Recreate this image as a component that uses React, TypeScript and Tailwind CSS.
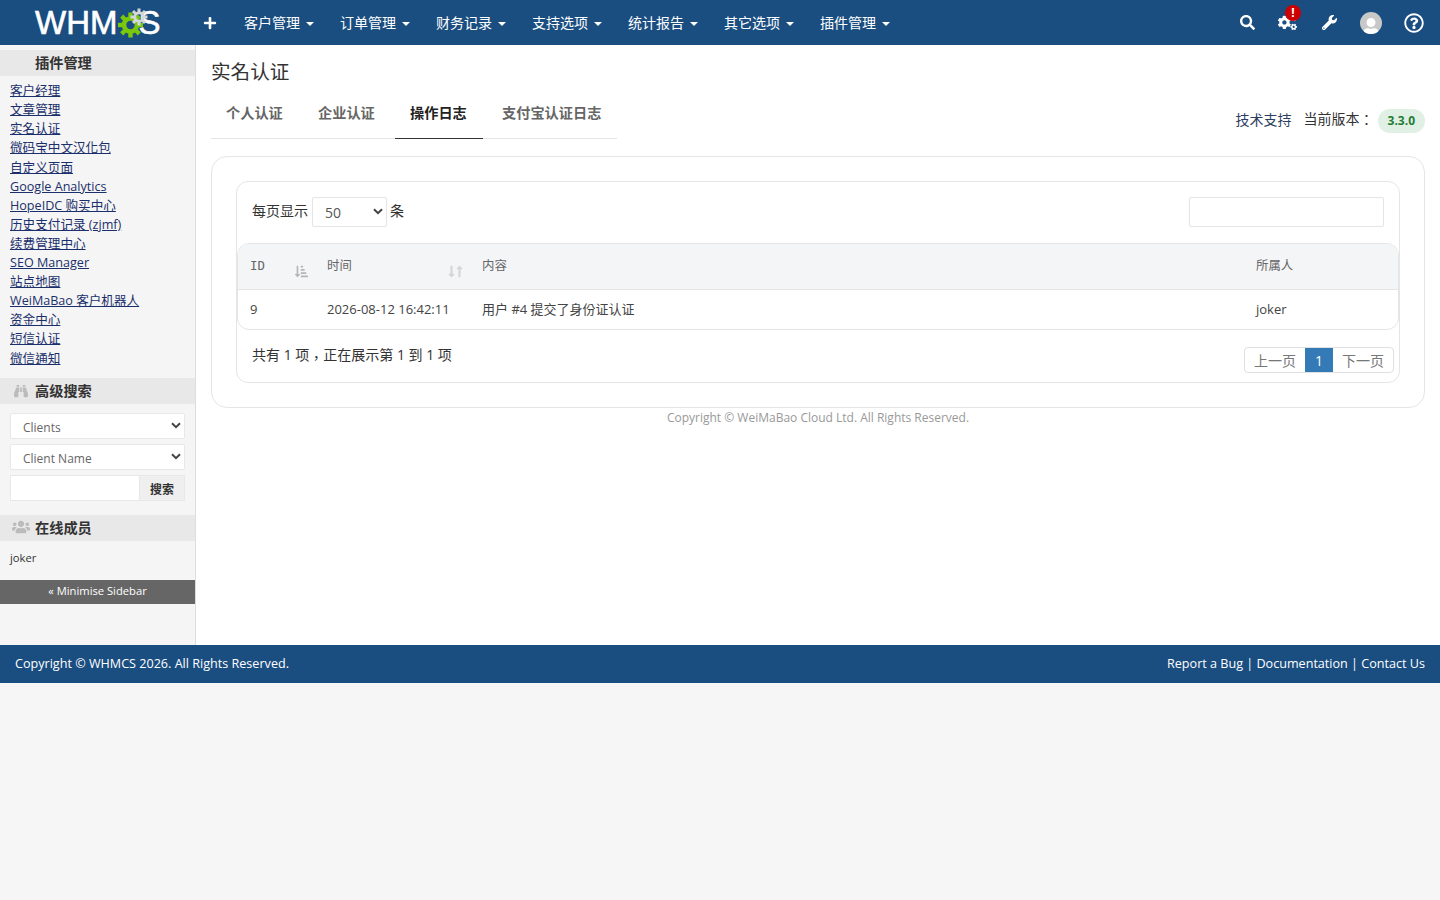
import { FaBinoculars, FaCogs, FaPlus, FaRegQuestionCircle, FaSearch, FaSortAmountDownAlt, FaUsers, FaWrench, FaUser, FaLongArrowAltDown, FaLongArrowAltUp } from "react-icons/fa";

const font = "font-['Open_Sans','Noto_Sans_CJK_TC',sans-serif]";

const navItems = ["客户管理", "订单管理", "财务记录", "支持选项", "统计报告", "其它选项", "插件管理"];
const addons = [
  "客户经理",
  "文章管理",
  "实名认证",
  "微码宝中文汉化包",
  "自定义页面",
  "Google Analytics",
  "HopeIDC 购买中心",
  "历史支付记录 (zjmf)",
  "续费管理中心",
  "SEO Manager",
  "站点地图",
  "WeiMaBao 客户机器人",
  "资金中心",
  "短信认证",
  "微信通知",
];

function Gear() {
  const teeth = [0, 45, 90, 135, 180, 225, 270, 315];
  return (
    <svg width="30" height="30" viewBox="0 0 30 30" className="shrink-0">
      <g transform="translate(12.5 17)">
        {teeth.map((a) => (
          <rect key={a} x="-2.2" y="-12.5" width="4.4" height="5" fill="#7ac70c" transform={`rotate(${a})`} />
        ))}
        <circle r="6.5" fill="none" stroke="#7ac70c" strokeWidth="4.6" />
      </g>
      <g transform="translate(21 9)">
        {teeth.map((a) => (
          <rect key={a} x="-1.5" y="-8.5" width="3" height="3.5" fill="#d5d8da" transform={`rotate(${a})`} />
        ))}
        <circle r="4.2" fill="none" stroke="#d5d8da" strokeWidth="3" />
      </g>
    </svg>
  );
}

function SideHeading({ icon, children }: { icon?: React.ReactNode; children: React.ReactNode }) {
  return (
    <div className="h-[26px] bg-[#e8e8e8] flex items-center relative pl-[35px] text-[14.2px] font-bold text-[#333]">
      {icon}
      {children}
    </div>
  );
}

function FakeSelect({ label, className, textClass = "mt-[4px]" }: { label: string; className: string; textClass?: string }) {
  return (
    <div className={`bg-white border border-[#e8e8e8] rounded-[2px] flex items-center justify-between ${className}`}>
      <span className={textClass}>{label}</span>
      <svg width="10" height="7" viewBox="0 0 10 7" className="mt-[-1px]">
        <path d="M1 1.2 5 5.2 9 1.2" fill="none" stroke="#444" strokeWidth="2" />
      </svg>
    </div>
  );
}

export default function App() {
  return (
    <div className={`${font} min-h-[900px] bg-[#f6f6f6] text-[13px] text-[#333]`}>
      <header className="h-[45px] bg-[#1a4d80] flex items-center text-white">
        <div className="w-[196px] pl-[35px] flex items-center shrink-0">
          <span className="font-['Liberation_Sans',sans-serif] text-[33px] leading-none [-webkit-text-stroke:0.6px_white]">WHM</span>
          <span className="font-['Liberation_Sans',sans-serif] text-[33px] leading-none ml-[21px] [-webkit-text-stroke:0.6px_white]">S</span>
          <span className="relative left-[-42px] w-0"><Gear /></span>
        </div>
        <FaPlus className="text-[14px] ml-[7px]" />
        <nav className="flex items-center ml-[27px] gap-[26px] text-[14px]">
          {navItems.map((item) => (
            <span key={item} className="flex items-center gap-[6px]">
              {item}
              <span className="w-0 h-0 border-x-[4px] border-x-transparent border-t-[4px] border-t-white mt-[2px]" />
            </span>
          ))}
        </nav>
        <div className="ml-auto flex items-center pr-[16px]">
          <FaSearch className="text-[15px] mr-[23px]" />
          <span className="relative mr-[25px]">
            <FaCogs className="text-[19px]" />
            <span className="absolute top-[-8px] right-[-4px] w-4 h-4 rounded-full bg-[#cc0000] text-[12px] leading-4 font-bold text-center">!</span>
          </span>
          <FaWrench className="text-[15px] mr-[23px]" />
          <span className="w-[22px] h-[22px] rounded-full bg-[#c8c8c8] overflow-hidden flex items-end justify-center mr-[22px]">
            <FaUser className="text-white text-[18px] mb-[-2px]" />
          </span>
          <FaRegQuestionCircle className="text-[20px]" />
        </div>
      </header>

      <div className="flex h-[600px] bg-white">
        <aside className="w-[196px] shrink-0 bg-[#f5f5f5] border-r border-[#ddd] pt-[5px]">
          <SideHeading>插件管理</SideHeading>
          <ul className="pl-[10px] pt-[5.2px] pb-[10.3px] text-[12.6px] leading-[19.1px] text-[#1a2f6b]">
            {addons.map((a) => (
              <li key={a}><a className="underline" href="#">{a}</a></li>
            ))}
          </ul>
          <SideHeading icon={<FaBinoculars className="absolute left-[14px] top-[6px] text-[#bbb] text-[14px]" />}>高级搜索</SideHeading>
          <div className="px-[10px] pt-[9px] pb-[14px] flex flex-col gap-[5px] text-[12px] text-[#666]">
            <FakeSelect label="Clients" className="h-[26px] pl-[12px] pr-[3px]" />
            <FakeSelect label="Client Name" className="h-[26px] pl-[12px] pr-[3px]" />
            <div className="flex h-[26px]">
              <div className="w-[130px] bg-white border border-[#e8e8e8]" />
              <div className="flex-1 bg-[#efefef] border border-[#e8e8e8] border-l-0 flex items-center justify-center font-bold text-[#333] pt-[4px]">搜索</div>
            </div>
          </div>
          <SideHeading icon={<FaUsers className="absolute left-[12px] top-[3.5px] text-[#bbb] text-[18px]" />}>在线成员</SideHeading>
          <div className="pl-[10px] pt-[8px] text-[11.2px] leading-[17px] h-[39px]">joker</div>
          <div className="h-[24px] bg-[#666] text-white text-[11.2px] flex items-center justify-center">« Minimise Sidebar</div>
        </aside>

        <main className="flex-1 px-[15px] pt-[12px]">
          <h1 className="text-[19.6px] leading-[30px] text-[#333]">实名认证</h1>
          <div className="flex items-end justify-between mt-[8px]">
            <div className="flex w-[406px] h-[44px] border-b border-[#e5e5e5] text-[14.2px] font-bold text-[#666]">
              <span className="w-[87px] pl-[15px] pt-[7px] mr-[5px]">个人认证</span>
              <span className="w-[87px] pl-[15px] pt-[7px] mr-[5px]">企业认证</span>
              <span className="w-[88px] pl-[15px] pt-[7px] mr-[4px] h-[44px] border-b border-[#333] text-[#222]">操作日志</span>
              <span className="pl-[15px] pt-[7px]">支付宝认证日志</span>
            </div>
            <div className="flex items-center mb-[6px] text-[14px]">
              <a className="mr-[12px] text-[#2c3e60] mb-[2px]" href="#">技术支持</a>
              <span className="mr-[4px] mb-[4px]">当前版本<span className="relative top-[1px]">：</span></span>
              <span className="h-[24px] px-[10px] rounded-full bg-[#e1f0e4] text-[#1e7e34] text-[12px] font-bold leading-[24px]">3.3.0</span>
            </div>
          </div>

          <div className="mt-[17px] h-[252px] border border-[#e5e5e5] rounded-[16px] p-[24px]">
            <div className="h-[202px] border border-[#e5e5e5] rounded-[12px] flex flex-col">
              <div className="h-[60px] mb-[1px] flex items-center justify-between pl-[15px] pr-[15px] text-[14px] shrink-0">
                <div className="flex items-center">
                  <span className="mb-[3px] mr-[4px]">每页显示</span>
                  <FakeSelect label="50" textClass="mt-[1px]" className="w-[75px] h-[30px] pl-[12px] pr-[3px] !border-[#e5e5e5] text-[#555]" />
                  <span className="mb-[3px] ml-[3px]">条</span>
                </div>
                <div className="w-[195px] h-[30px] border border-[#e5e5e5] rounded-[2px]" />
              </div>
              <div className="border border-[#e5e5e5] rounded-[12px] overflow-hidden shrink-0">
                <div className="grid grid-cols-[89px_155px_774px_1fr] h-[46px] bg-[#f4f5f7] border-b border-[#e5e5e5] text-[12.4px] text-[#666]">
                  <div className="relative pl-[12px] pt-[13px] font-['DejaVu_Sans_Mono',monospace] text-[12.4px]">
                    ID
                    <FaSortAmountDownAlt className="absolute right-[19px] top-[21px] text-[13px] text-[#b5b5b5]" />
                  </div>
                  <div className="relative pt-[13px]">
                    时间
                    <span className="absolute right-[16px] top-[21px] flex text-[#d5d5d5] text-[13px]">
                      <FaLongArrowAltDown className="mr-[-5px]" />
                      <FaLongArrowAltUp />
                    </span>
                  </div>
                  <div className="pt-[13px]">内容</div>
                  <div className="pt-[13px]">所属人</div>
                </div>
                <div className="grid grid-cols-[89px_155px_774px_1fr] h-[39px] items-center text-[13px] text-[#444]">
                  <div className="pl-[12px]">9</div>
                  <div>2026-08-12 16:42:11</div>
                  <div>用户 #4 提交了身份证认证</div>
                  <div>joker</div>
                </div>
              </div>
              <div className="flex justify-between pl-[15px] pr-[5px] flex-1">
                <div className="pt-[15px] text-[14px] leading-[20px]">共有 1 项<span className="relative top-[3px]">，</span>正在展示第 1 到 1 项</div>
                <div className="flex h-[26px] mt-[17px] border border-[#e0e0e0] rounded-[4px] text-[14px] text-[#777] overflow-hidden">
                  <span className="w-[60px] flex items-center justify-center">上一页</span>
                  <span className="w-[28px] flex items-center justify-center bg-[#337ab7] text-white">1</span>
                  <span className="w-[60px] flex items-center justify-center">下一页</span>
                </div>
              </div>
            </div>
          </div>
          <p className="text-center text-[12px] text-[#999] mt-[1px] leading-[18px]">Copyright © WeiMaBao Cloud Ltd. All Rights Reserved.</p>
        </main>
      </div>

      <footer className="h-[38px] bg-[#1a4d80] text-white flex items-center justify-between px-[15px] text-[12.6px]">
        <span>Copyright © WHMCS 2026. All Rights Reserved.</span>
        <span>Report a Bug | Documentation | Contact Us</span>
      </footer>
    </div>
  );
}
